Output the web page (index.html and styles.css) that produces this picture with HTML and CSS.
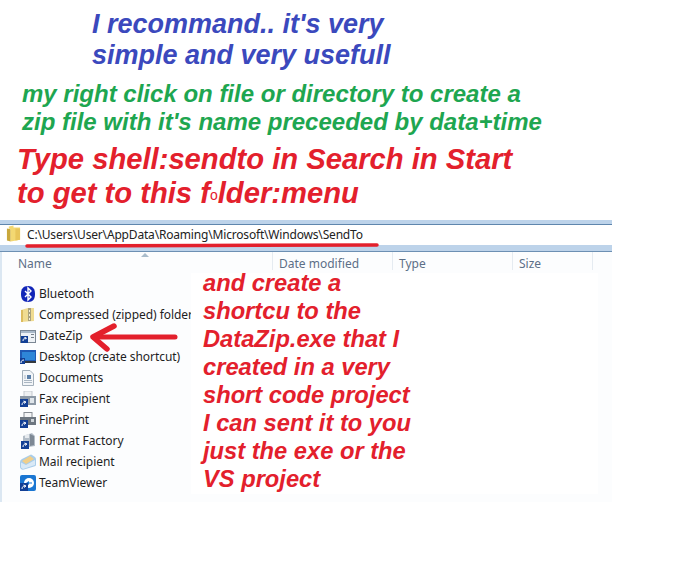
FILE: index.html
```html
<!DOCTYPE html>
<html lang="en">
<head>
<meta charset="utf-8">
<title>SendTo</title>
<link rel="stylesheet" href="styles.css">
</head>
<body>
<main class="canvas">
  <section class="explorer">
    <div class="address">
      <svg class="folder" viewBox="0 0 16 18" width="15" height="18"><path d="M1 3 L1 16 L5 17 L5 4 Z" fill="#c9a83c"/><path d="M3 1 L8 0 L8 2 L15 2 L15 15 L5 17 L5 4 L3 3 Z" fill="#f3d872"/><path d="M10 3 L15 3 L15 15 L10 16 Z" fill="#e8c55a"/></svg>
      <span class="path">C:\Users\User\AppData\Roaming\Microsoft\Windows\SendTo</span>
    </div>
    <div class="band"></div>
    <div class="headers">
      <span class="col col-name">Name</span>
      <span class="col">Date modified</span>
      <span class="col">Type</span>
      <span class="col">Size</span>
      <span class="col col-end"></span>
      <svg class="sort" viewBox="0 0 8 4" width="8" height="4"><path d="M4 0 L8 4 L0 4 Z" fill="#a9bccb"/></svg>
    </div>
    <ul class="files">
      <li class="file"><svg viewBox="0 0 16 16" width="16" height="16"><path d="M8 0 C13 0 15 3 15 8 C15 13 13 16 8 16 C3 16 1 13 1 8 C1 3 3 0 8 0 Z" fill="#1226b8"/><path d="M5 5 L11 11 L8 14 L8 2 L11 5 L5 11" fill="none" stroke="#fff" stroke-width="1.4"/></svg><span>Bluetooth</span></li>
      <li class="file"><svg viewBox="0 0 16 16" width="16" height="16"><path d="M1 3 L8 1 L14 1 L14 14 L1 15 Z" fill="#f0dc92"/><path d="M8 1 L11 1 L11 14 L8 14 Z" fill="#a9a27e"/><path d="M9 3h1v2H9zM9 7h1v2H9zM9 11h1v2H9z" fill="#f5f0d8"/><path d="M1 3 L1 15 L3 15 L3 3 Z" fill="#dcbc60"/></svg><span>Compressed (zipped) folder</span></li>
      <li class="file"><svg viewBox="0 0 16 16" width="16" height="16"><rect x="0.5" y="2.5" width="15" height="12" fill="#eef2f6" stroke="#7b8794"/><rect x="1" y="3" width="14" height="2" fill="#a9b9c9"/><rect x="11" y="6" width="3" height="1" fill="#78828c"/><rect x="11" y="9" width="3" height="1" fill="#78828c"/><rect x="1" y="8" width="7" height="7" fill="#123f95"/><path d="M3 13 C3 11 4 10 6 10 M4.500 9.500 L6.500 10 L5 11.500" fill="none" stroke="#fff"/></svg><span>DateZip</span></li>
      <li class="file"><svg viewBox="0 0 16 16" width="16" height="16"><rect x="0" y="1" width="16" height="12" fill="#1f59b5"/><rect x="2" y="3" width="13" height="8" fill="#2e86d8"/><rect x="5" y="12" width="11" height="2" fill="#33383f"/><rect x="0" y="9" width="5" height="6" fill="#123f95"/><path d="M1 14 C1 12 2 11 4 11" fill="none" stroke="#fff"/></svg><span>Desktop (create shortcut)</span></li>
      <li class="file"><svg viewBox="0 0 16 16" width="16" height="16"><path d="M2.500 .5 H10 L13.500 4 V15.500 H2.500 Z" fill="#f2f5f8" stroke="#a3afba"/><rect x="7" y="5" width="4" height="4" fill="#5b7fa8"/><path d="M4 10.500 H12 M4 12.500 H12 M4 6 H6 M4 8 H6" stroke="#aab6c2"/></svg><span>Documents</span></li>
      <li class="file"><svg viewBox="0 0 16 16" width="16" height="16"><rect x="4" y="0" width="8" height="6" fill="#eef0f2" stroke="#c4c9cf"/><rect x="0" y="5" width="16" height="9" fill="#8d99a6"/><rect x="10" y="7" width="4" height="5" fill="#dfe5ea"/><rect x="0" y="8" width="8" height="8" fill="#123f95"/><path d="M2 14 C2 12 3 11 5 11 M3.500 10 L6 11 L4 12.500" fill="none" stroke="#fff"/></svg><span>Fax recipient</span></li>
      <li class="file"><svg viewBox="0 0 16 16" width="16" height="16"><rect x="4" y="0.500" width="8" height="5" fill="#f4f5f6" stroke="#878d94"/><rect x="0" y="5" width="16" height="8" fill="#6d7680"/><rect x="11" y="7" width="3" height="3" fill="#cdd3d8"/><rect x="0" y="8" width="8" height="8" fill="#123f95"/><path d="M2 14 C2 12 3 11 5 11 M3.500 10 L6 11 L4 12.500" fill="none" stroke="#fff"/></svg><span>FinePrint</span></li>
      <li class="file"><svg viewBox="0 0 16 16" width="16" height="16"><path d="M3 3 L12 0 L15 3 V13 L3 15 Z" fill="#b3bdc7"/><path d="M10 1 L14 3 V12 L10 13 Z" fill="#7d8894"/><path d="M5 2 L9 1 L9 5 L5 5 Z" fill="#e7ebef"/><rect x="1" y="8" width="8" height="8" fill="#123f95"/><path d="M3 14 C3 12 4 11 6 11 M4.500 10 L7 11 L5 12.500" fill="none" stroke="#fff"/></svg><span>Format Factory</span></li>
      <li class="file"><svg viewBox="0 0 16 16" width="16" height="16"><path d="M0 8 Q0 6 2 5 L10 1 Q11 0 12 1 L15 3 Q16 4 16 5 V11 Q16 12 14 12.500 L4 15.500 Q2 16 1 15 Q0 14 0 13 Z" fill="#a9cdea"/><path d="M2 7 L10 2 L14 5 L6 10 Z" fill="#f1cf8a"/><path d="M1 8.500 L6 11 L15 6 V11 L3 15 L1 13.500 Z" fill="#d9e9f6"/></svg><span>Mail recipient</span></li>
      <li class="file"><svg viewBox="0 0 16 16" width="16" height="16"><rect x="0" y="0" width="16" height="16" rx="2" fill="#1a76d2"/><circle cx="9" cy="8" r="5" fill="#fff"/><path d="M6 8 L9 6 V7.500 H12 V8.500 H9 V10 Z" fill="#1a76d2"/><rect x="0" y="8" width="8" height="8" fill="#123f95"/><path d="M2 14 C2 12 3 11 5 11 M3.500 10 L6 11 L4 12.500" fill="none" stroke="#fff"/></svg><span>TeamViewer</span></li>
    </ul>
  </section>

  <div class="backdrop"></div>

  <p class="note note-blue">I recommand.. it's very<br>simple and very usefull</p>
  <p class="note note-green">my right click on file or directory to create a<br>zip file with it's name preceeded by data+time</p>
  <p class="note note-red-top">Type shell:sendto in Search in Start<br>to get to this f<span class="small-o">o</span>lder:menu</p>
  <p class="note note-red-side">and create a<br>shortcu to the<br>DataZip.exe that I<br>created in a very<br>short code project<br>I can sent it to you<br>just the exe or the<br>VS project</p>

  <svg class="ink" viewBox="0 0 681 584" width="681" height="584">
    <path d="M27 246 L202 245.500 L377 245" fill="none" stroke="#e3202c" stroke-width="3.500" stroke-linecap="round"/>
    <path d="M175 337 H96" fill="none" stroke="#e3202c" stroke-width="5" stroke-linecap="round"/>
    <path d="M114 326 L93 337 L107 349" fill="none" stroke="#e3202c" stroke-width="5.500" stroke-linecap="round" stroke-linejoin="round"/>
  </svg>
</main>
</body>
</html>
```
FILE: styles.css
```css
* {
  box-sizing: border-box;
}

html,
body {
  margin: 0;
  padding: 0;
  background: #fff;
}

.canvas {
  position: relative;
  width: 681px;
  height: 584px;
  padding-top: 220px;
  overflow: hidden;
}

.explorer {
  width: 612px;
  height: 282px;
  background: #fcfdfe;
  border-left: 2px solid #dbe7f2;
  display: flex;
  flex-direction: column;
  font-family: "Noto Sans", sans-serif;
  font-size: 12px;
}

.address {
  margin-left: -2px;
  height: 31px;
  padding: 5px 0 6px 6px;
  display: flex;
  align-items: center;
  gap: 6px;
  background: #fff;
  border-top: 4px solid #bdd3ea;
  border-bottom: 6px solid #bdd3ea;
  box-shadow: inset 0 1px 0 #5f86ad;
  color: #222;
}

.path {
  font-size: 12px;
  letter-spacing: -0.18px;
  white-space: nowrap;
}

.band {
  margin-left: -2px;
  height: 1px;
  background: #6d90b3;
}

.headers {
  position: relative;
  display: grid;
  grid-template-columns: 271px 120px 120px 80px 1fr;
  height: 18px;
  margin-bottom: 4px;
  line-height: 11px;
  color: #5c6f87;
}

.col {
  padding: 6px 0 0 6px;
  border-right: 1px solid #e5ebf1;
}

.col-name {
  padding-left: 16px;
}

.col-end {
  border-right: 0;
}

.sort {
  position: absolute;
  left: 139px;
  top: 1px;
}

.files {
  list-style: none;
  margin: 0;
  padding: 9px 0 0 18px;
  display: flex;
  flex-direction: column;
  color: #1e1e1e;
}

.file {
  height: 21px;
  display: flex;
  align-items: center;
  gap: 3px;
  letter-spacing: -0.05px;
  white-space: nowrap;
}

.backdrop {
  position: absolute;
  left: 191px;
  top: 273px;
  width: 407px;
  height: 221px;
  background: #fff;
}

.note {
  position: absolute;
  margin: 0;
  font-family: "Liberation Sans", Arial, sans-serif;
  font-weight: bold;
  font-style: italic;
  white-space: nowrap;
}

.note-blue {
  left: 92px;
  top: 9px;
  font-size: 27px;
  line-height: 31px;
  color: #3b49bd;
}

.note-green {
  left: 22px;
  top: 80px;
  font-size: 24px;
  line-height: 28px;
  color: #1ea650;
}

.note-red-top {
  left: 17px;
  top: 142px;
  font-size: 29.2px;
  line-height: 34px;
  color: #e3202c;
}

.small-o {
  font-size: 14px;
  font-style: normal;
  font-weight: normal;
  vertical-align: 3px;
  line-height: 1;
}

.note-red-side {
  left: 203px;
  top: 269px;
  font-size: 23.7px;
  line-height: 28px;
  color: #e3202c;
}

.ink {
  position: absolute;
  left: 0;
  top: 0;
  pointer-events: none;
}
```
